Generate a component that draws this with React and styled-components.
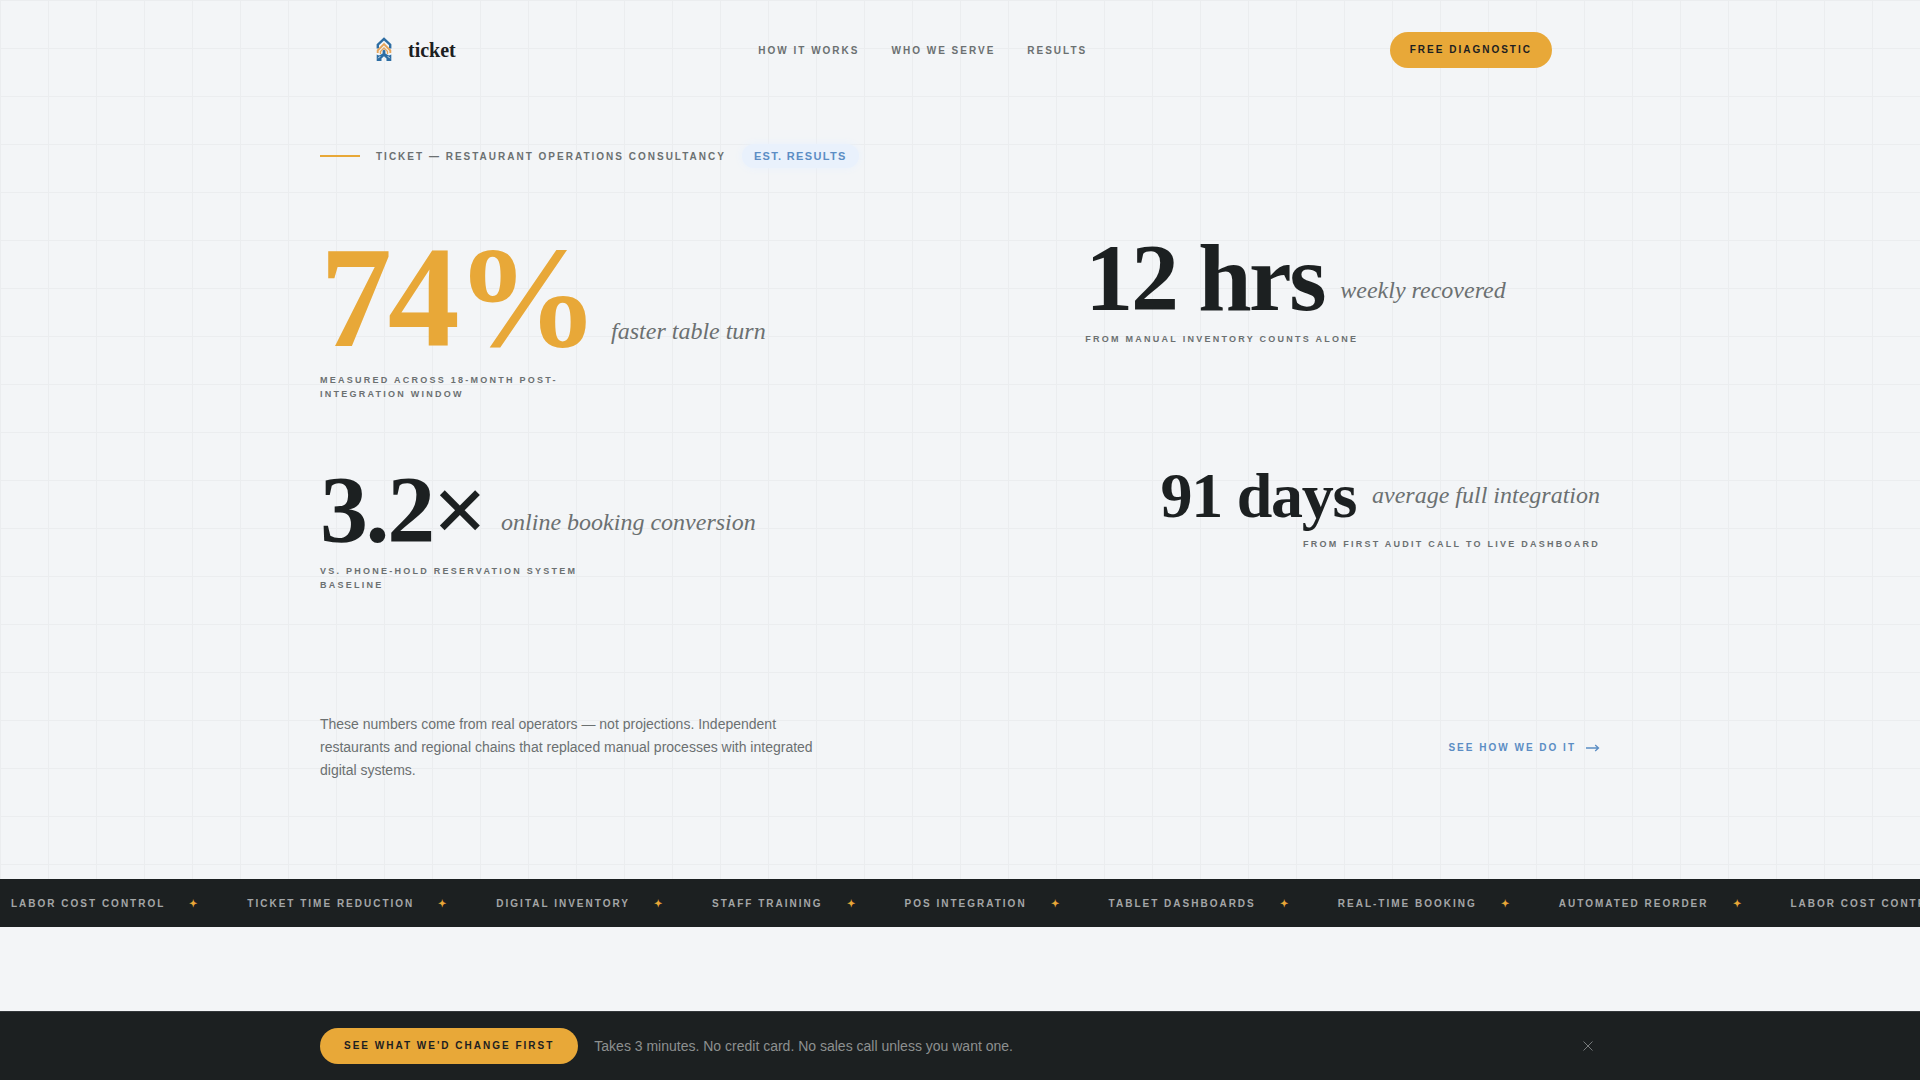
import React, { useState } from 'react';

import styled, { createGlobalStyle, css } from 'styled-components';

const colors = {
    amber: '#e8a838',
    blue: '#5b8dc4',
    chip: '#e9f1fc',
    ink: '#1c2021',
    line: '#ebedef',
    muted: '#6b7071',
    page: '#f3f5f7',
};

const sans = '"Liberation Sans", Arial, sans-serif';
const serif = '"Liberation Serif", "Times New Roman", serif';

const GlobalStyle = createGlobalStyle`
    * {
        box-sizing: border-box;
    }

    body {
        background: ${colors.page};
        color: ${colors.ink};
        font-family: ${sans};
        margin: 0;
        overflow-x: hidden;
    }
`;

const label = css`
    font-family: ${sans};
    font-size: 10px;
    font-weight: 700;
    letter-spacing: 0.2em;
    line-height: 16px;
    text-transform: uppercase;
`;

const Page = styled.div`
    padding-bottom: 84px;
`;

const GridBackdrop = styled.div`
    background-image:
        linear-gradient(${colors.line} 1px, transparent 1px),
        linear-gradient(90deg, ${colors.line} 1px, transparent 1px);
    background-size: 48px 48px;
`;

const Nav = styled.nav`
    align-items: center;
    display: flex;
    height: 100px;
    justify-content: space-between;
    margin: 0 auto;
    max-width: 1280px;
    padding: 0 48px;
`;

const Brand = styled.a`
    align-items: center;
    color: ${colors.ink};
    display: flex;
    font: 700 20px/24px ${serif};
    gap: 8px;
    text-decoration: none;
`;

const NavLinks = styled.div`
    display: flex;
    gap: 32px;
`;

const NavLink = styled.a`
    ${label}
    color: ${colors.muted};
    line-height: 17px;
    text-decoration: none;
`;

const PillButton = styled.button`
    ${label}
    background: ${colors.amber};
    border: 0;
    border-radius: 18px;
    color: ${colors.ink};
    cursor: pointer;
    padding: 10px ${({ $wide }) => ($wide ? 24 : 20)}px;
`;

const Hero = styled.main`
    margin: 0 auto;
    max-width: 1280px;
    padding: 44px 0 97px;
`;

const Eyebrow = styled.div`
    align-items: center;
    display: flex;
    gap: 16px;
`;

const Rule = styled.span`
    background: ${colors.amber};
    height: 2px;
    width: 40px;
`;

const EyebrowText = styled.span`
    ${label}
    color: ${colors.muted};
    line-height: 17px;
`;

const Chip = styled.span`
    background: ${colors.chip};
    border-radius: 12px;
    box-shadow: 0 0 8px ${colors.chip};
    color: ${colors.blue};
    font-size: 11px;
    font-weight: 700;
    letter-spacing: 0.12em;
    line-height: 16px;
    padding: 4px 12px;
    text-transform: uppercase;
`;

const Stats = styled.section`
    column-gap: 32px;
    display: grid;
    grid-template-columns: repeat(12, 1fr);
    margin-top: 69px;
    row-gap: 68px;
`;

const StatBlock = styled.div`
    display: flex;
    flex-direction: column;
    gap: 14px;
    grid-column: span ${({ $span }) => $span};
    ${({ $end }) => $end && css`
        align-items: flex-end;
    `}
`;

const StatLine = styled.div`
    align-items: flex-end;
    display: flex;
    gap: 16px;
`;

const numberSizes = {
    large: { font: 144, line: 122, tracking: '-0.03em' },
    medium: { font: 96, line: 81, tracking: '-0.025em' },
    small: { font: 64, line: 54, tracking: '-0.02em' },
};

const StatNumber = styled.span`
    color: ${({ $accent }) => ($accent ? colors.amber : colors.ink)};
    font-family: ${serif};
    font-size: ${({ $size }) => numberSizes[$size].font}px;
    font-weight: 700;
    letter-spacing: ${({ $size }) => numberSizes[$size].tracking};
    line-height: ${({ $size }) => numberSizes[$size].line}px;
`;

const StatUnit = styled.span`
    color: ${colors.muted};
    font: italic 24px/40px ${serif};
    padding-bottom: 8px;
`;

const Caption = styled.p`
    color: ${colors.muted};
    font-size: 9px;
    font-weight: 700;
    letter-spacing: 0.25em;
    line-height: 14px;
    margin: 0;
    max-width: ${({ $wide }) => ($wide ? 'none' : '280px')};
    text-transform: uppercase;
`;

const HeroFooter = styled.div`
    align-items: center;
    display: flex;
    justify-content: space-between;
    margin-top: 121px;
`;

const Intro = styled.p`
    color: ${colors.muted};
    font-size: 14px;
    line-height: 23px;
    margin: 0;
    max-width: 512px;
`;

const MoreLink = styled.a`
    ${label}
    align-items: center;
    color: ${colors.blue};
    display: flex;
    gap: 10px;
    text-decoration: none;
`;

const Marquee = styled.div`
    background: ${colors.ink};
    height: 48px;
    overflow: hidden;
`;

const MarqueeTrack = styled.div`
    align-items: center;
    display: flex;
    height: 100%;
    margin-left: -13px;
    width: max-content;
`;

const MarqueeItem = styled.span`
    ${label}
    align-items: center;
    color: #a4a6a7;
    display: flex;
    gap: 24px;
    line-height: 17px;
    padding: 0 24px;
`;

const Star = styled.span`
    color: ${colors.amber};
`;

const StickyBar = styled.aside`
    background: ${colors.ink};
    border-top: 1px solid #33373a;
    bottom: 0;
    left: 0;
    padding: 16px 0;
    position: fixed;
    right: 0;
`;

const StickyInner = styled.div`
    align-items: center;
    display: flex;
    gap: 16px;
    margin: 0 auto;
    max-width: 1280px;
`;

const StickyText = styled.span`
    color: #8d9090;
    font-size: 14px;
    line-height: 20px;
`;

const CloseButton = styled.button`
    background: none;
    border: 0;
    color: #777b7c;
    cursor: pointer;
    display: flex;
    margin-left: auto;
    padding: 7px;
`;

const stats = [
    {
        accent: true,
        caption: 'Measured across 18-month post-integration window',
        size: 'large',
        span: 7,
        unit: 'faster table turn',
        value: '74%',
    },
    {
        caption: 'From manual inventory counts alone',
        size: 'medium',
        span: 5,
        unit: 'weekly recovered',
        value: '12 hrs',
    },
    {
        caption: 'vs. phone-hold reservation system baseline',
        size: 'medium',
        span: 6,
        unit: 'online booking conversion',
        value: '3.2×',
    },
    {
        caption: 'From first audit call to live dashboard',
        end: true,
        size: 'small',
        span: 6,
        unit: 'average full integration',
        value: '91 days',
    },
];

const topics = [
    'Labor cost control',
    'Ticket time reduction',
    'Digital inventory',
    'Staff training',
    'POS integration',
    'Tablet dashboards',
    'Real-time booking',
    'Automated reorder',
];

const Logo = () => (
    <svg width="32" height="32" viewBox="0 0 32 32" fill="none" aria-hidden="true">
        <path d="M9.800 14.500v-3.800L16 4.800l6.200 5.900v3.800" stroke="#2d6da3" strokeWidth="2.400" />
        <path d="M9.700 19v-2.500L16 10l6.300 6.500V19" stroke="#e6a55a" strokeWidth="1.900" />
        <path d="M12.500 20v-2.500L16 14l3.500 3.500V20" stroke="#e6a55a" strokeWidth="1.400" />
        <path d="M8.700 20.500l2.300 1 2-1 1.600-1V16.800L16 15.500l1.400 1.300v2.700l1.600 1 2 1 2.300-1V27h-4.800v-2.500L16 22.300l-2.500 2.200V27H8.700z" fill="#2d6da3" />
        <path d="M10.200 24.200l2-2M21.800 24.200l-2-2" stroke="#f3f5f7" strokeWidth="0.900" />
    </svg>
);

const Arrow = () => (
    <svg width="14" height="8" viewBox="0 0 14 8" fill="none" stroke="currentColor" aria-hidden="true">
        <path d="M0 4h12.500M9.200 1l3.300 3-3.300 3" strokeWidth="1.300" />
    </svg>
);

const Cross = () => (
    <svg width="10" height="10" viewBox="0 0 10 10" stroke="currentColor" aria-hidden="true">
        <path d="M0.500 0.500l9 9M9.500 0.500l-9 9" />
    </svg>
);

const Stat = ({ accent, caption, end, size, span, unit, value }) => (
    <StatBlock $end={end} $span={span}>
        <StatLine>
            <StatNumber $accent={accent} $size={size}>{value}</StatNumber>
            <StatUnit>{unit}</StatUnit>
        </StatLine>
        <Caption $wide={span === 5 || end}>{caption}</Caption>
    </StatBlock>
);

const App = () => {
    const [ showBar, setShowBar ] = useState(true);

    return (
        <Page>
            <GlobalStyle />
            <GridBackdrop>
                <Nav>
                    <Brand href="#top">
                        <Logo />
                        ticket
                    </Brand>
                    <NavLinks>
                        <NavLink href="#how">How it works</NavLink>
                        <NavLink href="#who">Who we serve</NavLink>
                        <NavLink href="#results">Results</NavLink>
                    </NavLinks>
                    <PillButton>Free diagnostic</PillButton>
                </Nav>
                <Hero>
                    <Eyebrow>
                        <Rule />
                        <EyebrowText>Ticket — Restaurant operations consultancy</EyebrowText>
                        <Chip>Est. results</Chip>
                    </Eyebrow>
                    <Stats>
                        {stats.map(stat => <Stat key={stat.value} {...stat} />)}
                    </Stats>
                    <HeroFooter>
                        <Intro>
                            These numbers come from real operators — not projections. Independent
                            restaurants and regional chains that replaced manual processes with
                            integrated digital systems.
                        </Intro>
                        <MoreLink href="#how">
                            See how we do it
                            <Arrow />
                        </MoreLink>
                    </HeroFooter>
                </Hero>
            </GridBackdrop>
            <Marquee>
                <MarqueeTrack>
                    {[ ...topics, ...topics ].map((topic, index) => (
                        <MarqueeItem key={`topic${index}`}>
                            {topic}
                            <Star>✦</Star>
                        </MarqueeItem>
                    ))}
                </MarqueeTrack>
            </Marquee>
            {showBar && (
                <StickyBar>
                    <StickyInner>
                        <PillButton $wide>See what we'd change first</PillButton>
                        <StickyText>
                            Takes 3 minutes. No credit card. No sales call unless you want one.
                        </StickyText>
                        <CloseButton aria-label="Dismiss" onClick={() => setShowBar(false)}>
                            <Cross />
                        </CloseButton>
                    </StickyInner>
                </StickyBar>
            )}
        </Page>
    );
};

export default App;
